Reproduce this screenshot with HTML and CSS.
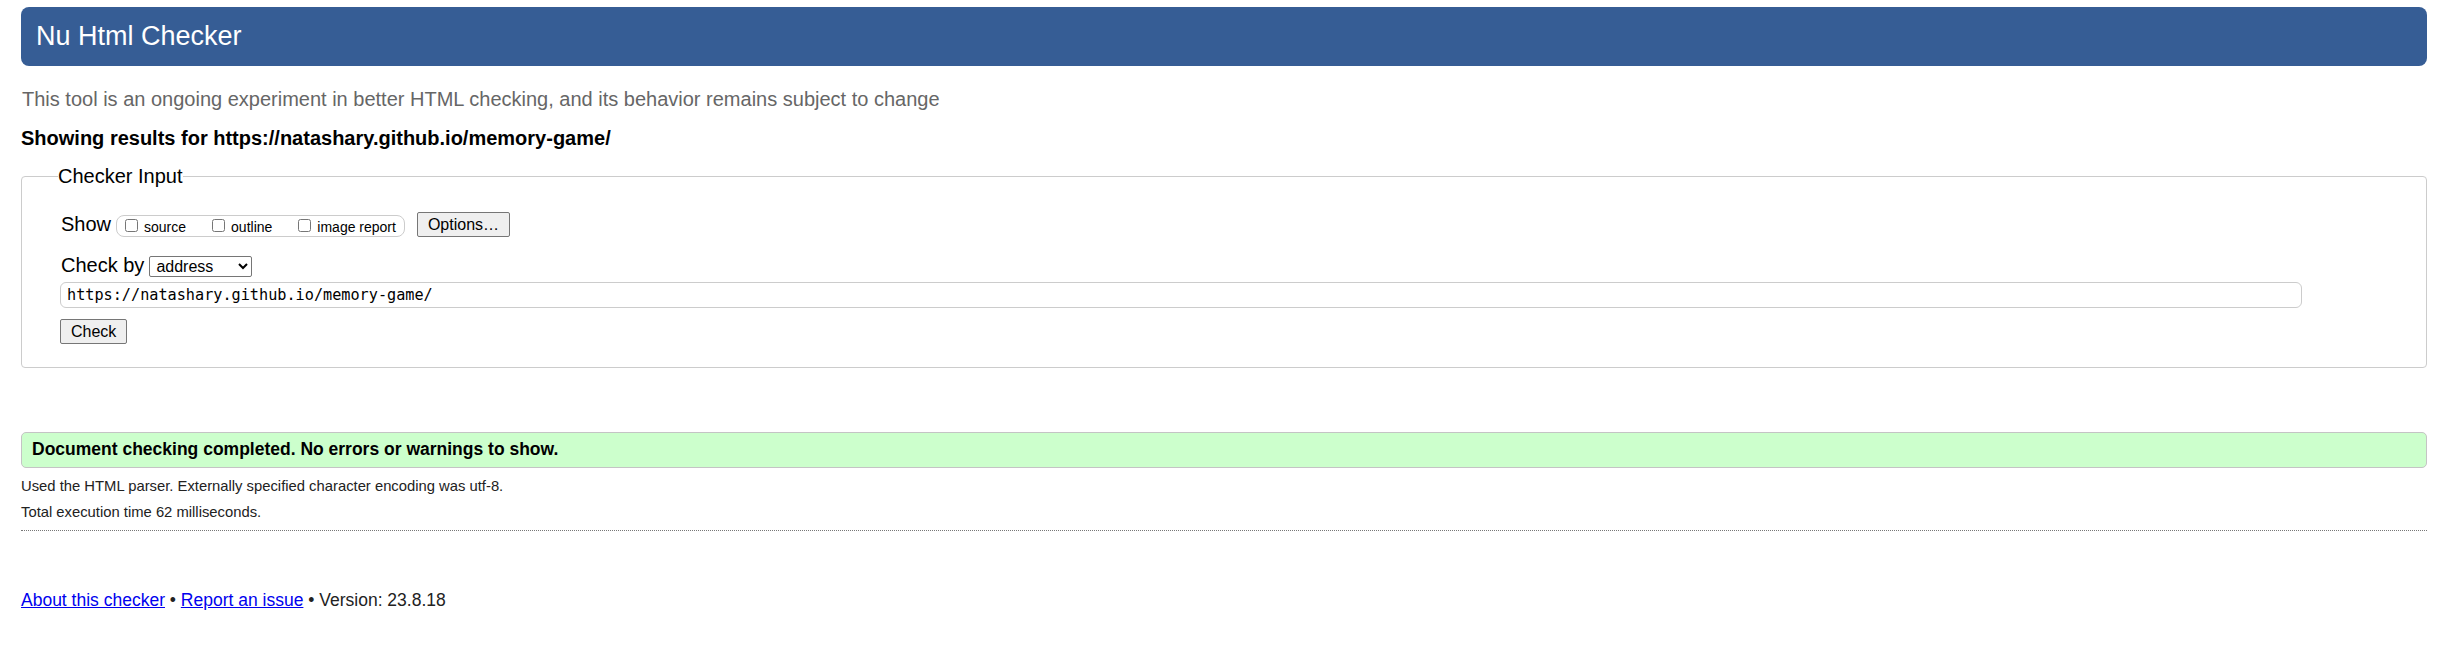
FILE: index.html
```html
<!DOCTYPE html>
<html lang="en">
<head>
<meta charset="utf-8">
<title>Nu Html Checker</title>
<link rel="stylesheet" href="styles.css">
</head>
<body>
<h1 class="title">Nu Html Checker</h1>
<p class="tagline">This tool is an ongoing experiment in better HTML checking, and its behavior remains subject to change</p>
<p class="results">Showing results for https://natashary.github.io/memory-game/</p>
<form class="form">
  <fieldset class="panel">
    <legend class="legend">Checker Input</legend>
    <div class="row">
      <span class="label">Show</span>
      <span class="group">
        <label class="opt"><input type="checkbox" class="cb">source</label>
        <label class="opt"><input type="checkbox" class="cb">outline</label>
        <label class="opt"><input type="checkbox" class="cb">image report</label>
      </span>
      <button type="button" class="btn options">Options…</button>
    </div>
    <div class="row row2">
      <span class="label">Check by</span>
      <select class="select"><option>address</option><option>file upload</option><option>text input</option></select>
    </div>
    <input class="doc" type="text" value="https://natashary.github.io/memory-game/">
    <div class="submit-row"><button type="button" class="btn">Check</button></div>
  </fieldset>
</form>
<p class="success">Document checking completed. No errors or warnings to show.</p>
<p class="details first">Used the HTML parser. Externally specified character encoding was utf-8.</p>
<p class="details">Total execution time 62 milliseconds.</p>
<hr class="rule">
<p class="footer"><a href="#">About this checker</a> • <a href="#">Report an issue</a> • Version: 23.8.18</p>
</body>
</html>
```

FILE: styles.css
```css
* { box-sizing: border-box; }

html { background: #fff; }

body {
  margin: 0;
  padding: 7px 25px 0 21px;
  font-family: "Liberation Sans", Arial, sans-serif;
  color: #000;
}

.title {
  margin: 0;
  height: 59px;
  padding-left: 15px;
  background: #365d95;
  color: #fff;
  border-radius: 8px;
  font-size: 27px;
  font-weight: normal;
  line-height: 59px;
}

.tagline {
  margin: 22px 0 0 1px;
  font-size: 20px;
  line-height: 23px;
  color: #666;
}

.results {
  margin: 16px 0 0;
  font-size: 20px;
  line-height: 23px;
  font-weight: bold;
}

.form { margin: 15px 0 0; }

.panel {
  margin: 0;
  padding: 24px 39px 23px 39px;
  border: 1px solid #ccc;
  border-radius: 4px;
  min-width: 0;
}

.legend {
  margin-left: -3px;
  padding: 0;
  font-size: 20px;
  line-height: 23px;
}

.row {
  display: flex;
  align-items: center;
  height: 25px;
}

.row2 {
  margin-top: 17px;
  height: 23px;
  gap: 5px;
}

.label {
  font-size: 20px;
  line-height: 23px;
}

.group {
  display: flex;
  margin-left: 5px;
  margin-top: 3px;
  height: 22px;
  padding: 0 8px 0 4px;
  border: 1px solid #ccc;
  border-radius: 8px;
  font-size: 14px;
  line-height: 20px;
  color: #000;
}

.opt { white-space: nowrap; }
.opt + .opt { margin-left: 22px; }

.cb {
  width: 13px;
  height: 13px;
  margin: 3px 6px 3px 4px;
  vertical-align: baseline;
}

.btn {
  height: 25px;
  padding: 0 10px;
  border: 1px solid #767676;
  border-radius: 2px;
  background: #efefef;
  color: #000;
  font-family: "Liberation Sans", Arial, sans-serif;
  font-size: 16px;
}

.options { margin-left: 12px; }

.select {
  width: 103px;
  height: 21px;
  margin-top: 2px;
  padding: 0 0 0 2px;
  border: 1px solid #767676;
  border-radius: 2px;
  background: #fff;
  font-family: "Liberation Sans", Arial, sans-serif;
  font-size: 16px;
  color: #000;
}

.doc {
  display: block;
  width: 96.4%;
  height: 26px;
  margin: 5px 0 0 -1px;
  padding: 0 6px;
  border: 1px solid #ccc;
  border-radius: 6px;
  font-family: "DejaVu Sans Mono", "Liberation Mono", monospace;
  font-size: 15.2px;
  color: #000;
  background: #fff;
}

.submit-row { margin: 11px 0 0 -1px; }

.success {
  margin: 64px 0 0;
  padding: 5px 10px 7px;
  border: 1px solid #c4c4c4;
  border-radius: 5px;
  background: #ccffcc;
  font-size: 17.5px;
  line-height: 22px;
  font-weight: bold;
}

.details {
  margin: 8px 0 0;
  font-size: 14.8px;
  line-height: 18px;
  color: #222;
}

.details.first { margin-top: 9px; }

.rule {
  margin: 9px 0 0;
  border: 0;
  border-top: 1px dotted #777;
  height: 0;
}

.footer {
  margin: 59px 0 0;
  font-size: 17.5px;
  line-height: 20px;
  color: #222;
}

.footer a { color: #0000ee; }
```
